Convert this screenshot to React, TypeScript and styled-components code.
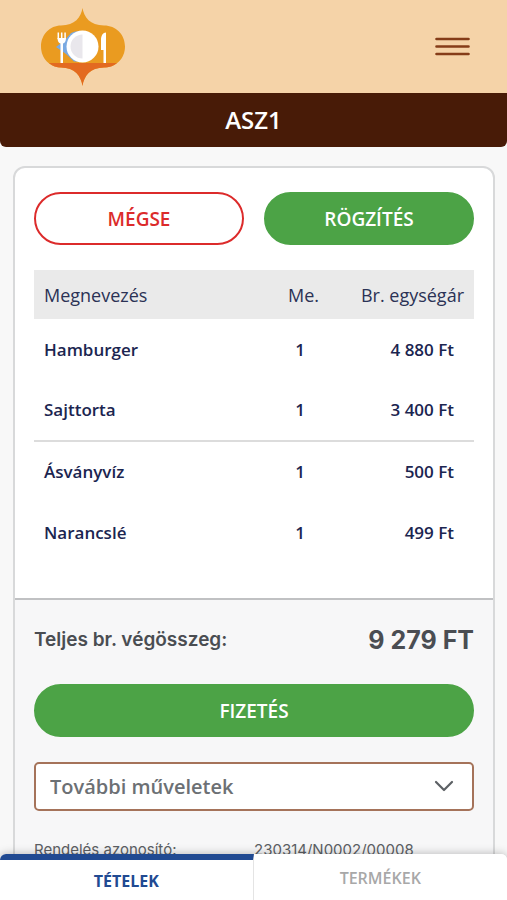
import React from "react";
import styled, { createGlobalStyle, css } from "styled-components";

const sans = `"Open Sans", "Noto Sans", sans-serif`;
const inter = `Inter, "Liberation Sans", sans-serif`;

const GlobalStyle = createGlobalStyle`
  *, *::before, *::after { box-sizing: border-box; }
  html { scrollbar-width: none; background: #f8f8f8; }
  body { margin: 0; font-family: ${sans}; color: #1b2550; }
  button, select { font: inherit; }
`;

const Page = styled.div`
  min-height: 100vh;
  padding-bottom: 46px;
`;

const Header = styled.header`
  display: flex;
  align-items: center;
  justify-content: space-between;
  height: 93px;
  padding: 0 37px 0 40px;
  background: #f5d3a8;
`;

const HomeLink = styled.a`
  display: block;
  line-height: 0;
`;

const MenuButton = styled.button`
  display: flex;
  padding: 0;
  border: 0;
  background: none;
  cursor: pointer;
`;

const TitleBar = styled.div`
  display: flex;
  align-items: center;
  justify-content: center;
  height: 54px;
  border-radius: 0 0 6px 6px;
  background: #481b07;
`;

const Title = styled.h1`
  margin: 0;
  font-size: 24px;
  line-height: 32px;
  font-weight: 600;
  color: #fff;
`;

const Card = styled.main`
  margin: 19px 12px 0 13px;
  border: 2px solid #d8d9da;
  border-radius: 12px 12px 0 0;
  background: #fff;
  overflow: hidden;
`;

const OrderSection = styled.section`
  padding: 24px 19px 35px;
`;

const ButtonRow = styled.div`
  display: grid;
  grid-template-columns: 1fr 1fr;
  gap: 20px;
  margin-bottom: 25px;
`;

const PillButton = styled.button<{ $outline?: boolean }>`
  width: 100%;
  height: 53px;
  padding: 0 20px;
  border: 2px solid #4ca346;
  border-radius: 27px;
  background: #4ca346;
  color: #fff;
  font-size: 19px;
  line-height: 26px;
  font-weight: 600;
  cursor: pointer;
  ${(p) =>
    p.$outline &&
    css`
      border-color: #dc2b2b;
      background: #fff;
      color: #dc2b2b;
    `}
`;

const ItemTable = styled.table`
  width: 100%;
  table-layout: fixed;
  border-collapse: collapse;
`;

const NameColumn = styled.col``;
const AmountColumn = styled.col`
  width: 44px;
`;
const PriceColumn = styled.col`
  width: 152px;
`;

const HeadCell = styled.th<{ $align?: "left" | "right" }>`
  height: 49px;
  padding: 0 10px;
  background: #eaeaea;
  color: #2b3255;
  font-size: 18px;
  font-weight: 400;
  text-align: ${(p) => p.$align ?? "left"};
  white-space: nowrap;
`;

const ItemRow = styled.tr<{ $divided?: boolean }>`
  border-bottom: ${(p) => (p.$divided ? "2px solid #dcdcdc" : "0")};
`;

const Cell = styled.td<{ $align?: "left" | "center" | "right" }>`
  height: 61px;
  padding: ${(p) => (p.$align === "right" ? "0 20px 0 10px" : "0 10px")};
  font-size: 17px;
  line-height: 24px;
  font-weight: 600;
  text-align: ${(p) => p.$align ?? "left"};
  white-space: nowrap;
`;

const SummarySection = styled.section`
  padding: 23px 19px 24px;
  border-top: 2px solid #c0c1c3;
  background: #f7f7f8;
`;

const TotalRow = styled.div`
  display: flex;
  align-items: center;
  justify-content: space-between;
  margin-bottom: 27px;
  font-family: ${inter};
  line-height: 34px;
  color: #4a4d52;
`;

const TotalLabel = styled.span`
  font-size: 19px;
  font-weight: 600;
`;

const TotalValue = styled.strong`
  font-size: 25px;
  font-weight: 700;
`;

const SelectWrap = styled.div`
  position: relative;
  margin: 25px 0;
`;

const ActionSelect = styled.select`
  display: block;
  width: 100%;
  height: 49px;
  padding: 0 48px 0 14px;
  border: 2px solid #a5735a;
  border-radius: 5px;
  background: #fff;
  color: #6c7074;
  font-size: 20px;
  font-weight: 600;
  appearance: none;
`;

const SelectArrow = styled.svg`
  position: absolute;
  top: 18px;
  right: 20px;
  pointer-events: none;
`;

const Details = styled.dl`
  display: grid;
  grid-template-columns: 1fr 1fr;
  margin: 0;
  font-family: ${inter};
  font-size: 15px;
  line-height: 28px;
  color: #5c5f64;
`;

const DetailLabel = styled.dt``;
const DetailValue = styled.dd`
  margin: 0;
`;

const TabBar = styled.nav`
  position: fixed;
  right: 0;
  bottom: 0;
  left: 0;
  display: grid;
  grid-template-columns: 1fr 1fr;
  height: 46px;
  border-radius: 6px 6px 0 0;
  background: #fff;
  box-shadow: 0 0 10px rgba(0, 0, 0, 0.28);
  overflow: hidden;
`;

const Tab = styled.button<{ $active?: boolean }>`
  padding: 2px 0 0;
  border: 0;
  border-top: ${(p) => (p.$active ? "6px solid #214a92" : "0")};
  border-right: ${(p) => (p.$active ? "1px solid #e4e4e4" : "0")};
  background: #fff;
  color: ${(p) => (p.$active ? "#214a92" : "#a8a8a8")};
  font-size: 16px;
  font-weight: ${(p) => (p.$active ? 700 : 600)};
  cursor: pointer;
`;

const Logo = () => (
  <svg width="86" height="80" viewBox="0 0 86 80" role="img" aria-label="Étterem">
    <path
      d="M42.500 1C44 10 50 18.500 64 18.500C76 18.500 85 27.500 85 39.500C85 51.500 76 60.500 64 60.500C50 60.500 44 69 42.500 79C41 69 35 60.500 21 60.500C10 60.500 1 51.500 1 39.500C1 27.500 10 18.500 21 18.500C35 18.500 41 10 42.500 1Z"
      fill="#ea9b20"
    />
    <path
      d="M9 56H77C73.500 59 69 60.500 64 60.500C50 60.500 44 69 42.500 79C41 69 35 60.500 21 60.500C16.500 60.500 12.500 59 9 56Z"
      fill="#e36a20"
    />
    <path d="M16 40L25 33L31 26L35 24.500H40V54.500H34L26 47Z" fill="#79a9e2" />
    <circle cx="42.500" cy="39.500" r="16" fill="#fff" />
    <path d="M42.500 27.500A12 12 0 0 0 42.500 51.500Z" fill="#e9e7ec" />
    <path
      d="M18.300 25.500V32M21.700 25.500V33M25.100 25.500V32"
      stroke="#fff"
      strokeWidth="1.500"
    />
    <path d="M17.500 31H26C26 34.500 24.500 36 23 36.500V56H20.500V36.500C19 36 17.500 34.500 17.500 31Z" fill="#fff" />
    <path d="M66 25.500V56H63.500V43H61V33C61 28.500 63 25.500 66 25.500Z" fill="#fff" />
  </svg>
);

const MenuIcon = () => (
  <svg width="35" height="19" viewBox="0 0 35 19" aria-hidden="true">
    <path
      d="M1.500 2H33.500M1.500 9.500H33.500M1.500 17H33.500"
      stroke="#853c18"
      strokeWidth="2.600"
      strokeLinecap="round"
    />
  </svg>
);

type Item = { name: string; amount: number; price: string; divided?: boolean };

const items: Item[] = [
  { name: "Hamburger", amount: 1, price: "4 880 Ft" },
  { name: "Sajttorta", amount: 1, price: "3 400 Ft", divided: true },
  { name: "Ásványvíz", amount: 1, price: "500 Ft" },
  { name: "Narancslé", amount: 1, price: "499 Ft" },
];

export default function App() {
  return (
    <>
      <GlobalStyle />
      <Page>
        <Header>
          <HomeLink href="#">
            <Logo />
          </HomeLink>
          <MenuButton type="button" aria-label="Menü">
            <MenuIcon />
          </MenuButton>
        </Header>
        <TitleBar>
          <Title>ASZ1</Title>
        </TitleBar>
        <Card>
          <OrderSection>
            <ButtonRow>
              <PillButton type="button" $outline>
                MÉGSE
              </PillButton>
              <PillButton type="button">RÖGZÍTÉS</PillButton>
            </ButtonRow>
            <ItemTable>
              <colgroup>
                <NameColumn />
                <AmountColumn />
                <PriceColumn />
              </colgroup>
              <thead>
                <tr>
                  <HeadCell scope="col">Megnevezés</HeadCell>
                  <HeadCell scope="col">Me.</HeadCell>
                  <HeadCell scope="col" $align="right">
                    Br. egységár
                  </HeadCell>
                </tr>
              </thead>
              <tbody>
                {items.map((item) => (
                  <ItemRow key={item.name} $divided={item.divided}>
                    <Cell>{item.name}</Cell>
                    <Cell $align="center">{item.amount}</Cell>
                    <Cell $align="right">{item.price}</Cell>
                  </ItemRow>
                ))}
              </tbody>
            </ItemTable>
          </OrderSection>
          <SummarySection>
            <TotalRow>
              <TotalLabel>Teljes br. végösszeg:</TotalLabel>
              <TotalValue>9 279 FT</TotalValue>
            </TotalRow>
            <PillButton type="button">FIZETÉS</PillButton>
            <SelectWrap>
              <ActionSelect aria-label="További műveletek" defaultValue="">
                <option value="">További műveletek</option>
              </ActionSelect>
              <SelectArrow width="20" height="13" viewBox="0 0 20 13" aria-hidden="true">
                <path
                  d="M2 2L10 10L18 2"
                  fill="none"
                  stroke="#5c6064"
                  strokeWidth="2.200"
                  strokeLinecap="round"
                  strokeLinejoin="round"
                />
              </SelectArrow>
            </SelectWrap>
            <Details>
              <DetailLabel>Rendelés azonosító:</DetailLabel>
              <DetailValue>230314/N0002/00008</DetailValue>
            </Details>
          </SummarySection>
        </Card>
      </Page>
      <TabBar>
        <Tab type="button" $active aria-current="page">
          TÉTELEK
        </Tab>
        <Tab type="button">TERMÉKEK</Tab>
      </TabBar>
    </>
  );
}
